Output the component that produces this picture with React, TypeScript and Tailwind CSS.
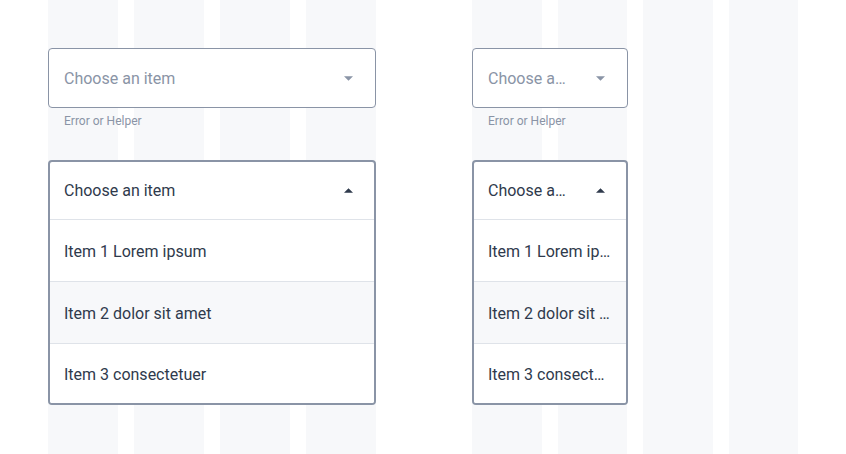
import React from 'react';

const items = ['Item 1 Lorem ipsum', 'Item 2 dolor sit amet', 'Item 3 consectetuer'];

function Caret({ up = false, className = '' }: { up?: boolean; className?: string }) {
  return (
    <span className="flex h-6 w-6 shrink-0 items-center justify-center">
      <svg width="9" height="5" viewBox="0 0 10 5" className={className}>
        {up ? <path d="M0 5l5-5 5 5z" fill="currentColor" /> : <path d="M0 0l5 5 5-5z" fill="currentColor" />}
      </svg>
    </span>
  );
}

function ClosedSelect() {
  return (
    <div>
      <div className="flex h-[60px] items-center gap-4 rounded-[4px] border border-[#8a94a6] bg-white pl-[15px] pr-[15px] pt-px">
        <span className="min-w-0 flex-1 truncate text-base text-[#8a94a6]">Choose an item</span>
        <Caret className="text-[#8a94a6]" />
      </div>
      <div className="mt-[5px] pl-4 text-xs leading-4 text-[#8a94a6]">Error or Helper</div>
    </div>
  );
}

function OpenSelect() {
  return (
    <div className="overflow-hidden rounded-[4px] border-2 border-[#8a94a6] bg-white">
      <div className="flex h-[58px] items-center gap-4 border-b border-[#dfe3e9] pl-[14px] pr-[14px]">
        <span className="min-w-0 flex-1 truncate text-base text-[#2f3a4c]">Choose an item</span>
        <Caret up className="text-[#2f3a4c]" />
      </div>
      {items.map((item, idx) => (
        <div
          key={item}
          className={`flex items-center px-[14px] pt-[2px] ${idx < items.length - 1 ? 'h-[62px] border-b border-[#dfe3e9]' : 'h-[59px]'} ${idx === 1 ? 'bg-[#f7f8fa]' : 'bg-white'}`}
        >
          <span className="min-w-0 flex-1 truncate text-base text-[#2f3a4c]">{item}</span>
        </div>
      ))}
    </div>
  );
}

function Group({ width }: { width: string }) {
  return (
    <div className="relative h-full w-[328px]">
      {/* layout grid columns */}
      <div className="absolute inset-0 grid grid-cols-4 gap-4">
        <div className="bg-[#f7f8fa]" />
        <div className="bg-[#f7f8fa]" />
        <div className="bg-[#f7f8fa]" />
        <div className="bg-[#f7f8fa]" />
      </div>
      <div className={`relative pt-[48px] ${width}`}>
        <ClosedSelect />
        <div className="mt-[31px]">
          <OpenSelect />
        </div>
      </div>
    </div>
  );
}

export default function App() {
  return (
    <div
      className="flex h-[454px] w-[846px] gap-[96px] overflow-hidden bg-white px-[48px]"
      style={{ fontFamily: 'Roboto, "Noto Sans", sans-serif' }}
    >
      <Group width="w-[328px]" />
      <Group width="w-[156px]" />
    </div>
  );
}
